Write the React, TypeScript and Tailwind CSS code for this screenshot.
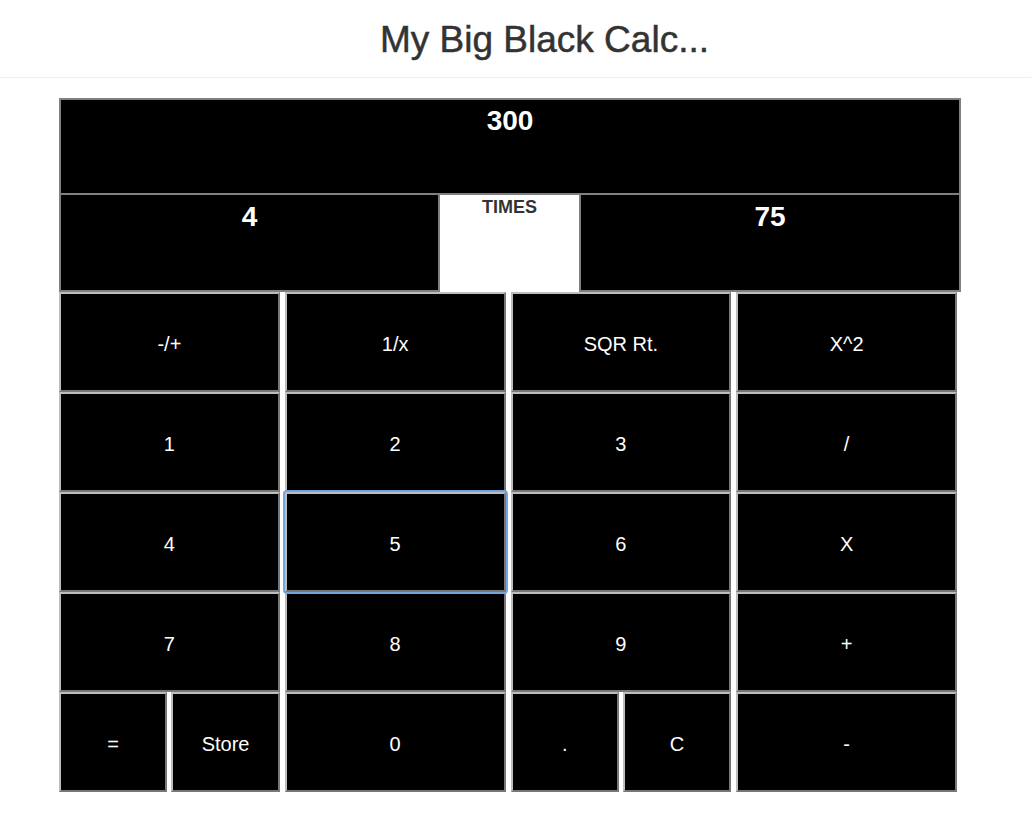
const keys: { label: string; focus?: boolean }[][] = [
  [{ label: "-/+" }, { label: "1/x" }, { label: "SQR Rt." }, { label: "X^2" }],
  [{ label: "1" }, { label: "2" }, { label: "3" }, { label: "/" }],
  [{ label: "4" }, { label: "5", focus: true }, { label: "6" }, { label: "X" }],
  [{ label: "7" }, { label: "8" }, { label: "9" }, { label: "+" }],
];

const btn =
  "w-full h-[100px] bg-black text-white text-[20px] pt-[3px] border-2 border-t-[#bdbdbd] border-l-[#bdbdbd] border-b-[#777] border-r-[#777] flex items-center justify-center";

const Key = ({ label, focus }: { label: string; focus?: boolean }) => (
  <button
    className={
      focus
        ? btn + " relative z-10 rounded-[2px] shadow-[0_0_0_2px_#74a6dc]"
        : btn
    }
  >
    {label}
  </button>
);

const App = () => {
  return (
    <div className="min-h-screen bg-white font-['Liberation_Sans',Arial,sans-serif]">
      <div className="border-b border-[#eee] pt-[21px] pb-[19px] pl-[58px] text-center">
        <h1 className="text-[37px] leading-[37px] text-[#333] [-webkit-text-stroke:0.5px_#333]">My Big Black Calc...</h1>
      </div>

      <div className="ml-[59px] mt-[20px] w-[902px]">
        <div className="h-[97px] border-2 border-[#808080] bg-black pt-0 text-center text-[28px] font-bold text-white">
          300
        </div>
        <div className="flex h-[97px]">
          <div className="w-[381px] border-2 border-t-0 border-[#808080] bg-black pt-[1px] text-center text-[28px] font-bold text-white">
            4
          </div>
          <div className="w-[139px] bg-white text-center text-[18px] leading-[24px] font-bold text-[#333]">
            TIMES
          </div>
          <div className="w-[382px] border-2 border-t-0 border-[#808080] bg-black pt-[1px] text-center text-[28px] font-bold text-white">
            75
          </div>
        </div>

        <div className="grid w-[898px] grid-cols-4 gap-x-[5px]">
          {keys.flat().map((k, i) => (
            <Key key={i} label={k.label} focus={k.focus} />
          ))}
          <div className="flex gap-[4px]">
            <div className="flex-1"><Key label="=" /></div>
            <div className="flex-1"><Key label="Store" /></div>
          </div>
          <Key label="0" />
          <div className="flex gap-[4px]">
            <div className="flex-1"><Key label="." /></div>
            <div className="flex-1"><Key label="C" /></div>
          </div>
          <Key label="-" />
        </div>
      </div>
    </div>
  );
};

export default App;
